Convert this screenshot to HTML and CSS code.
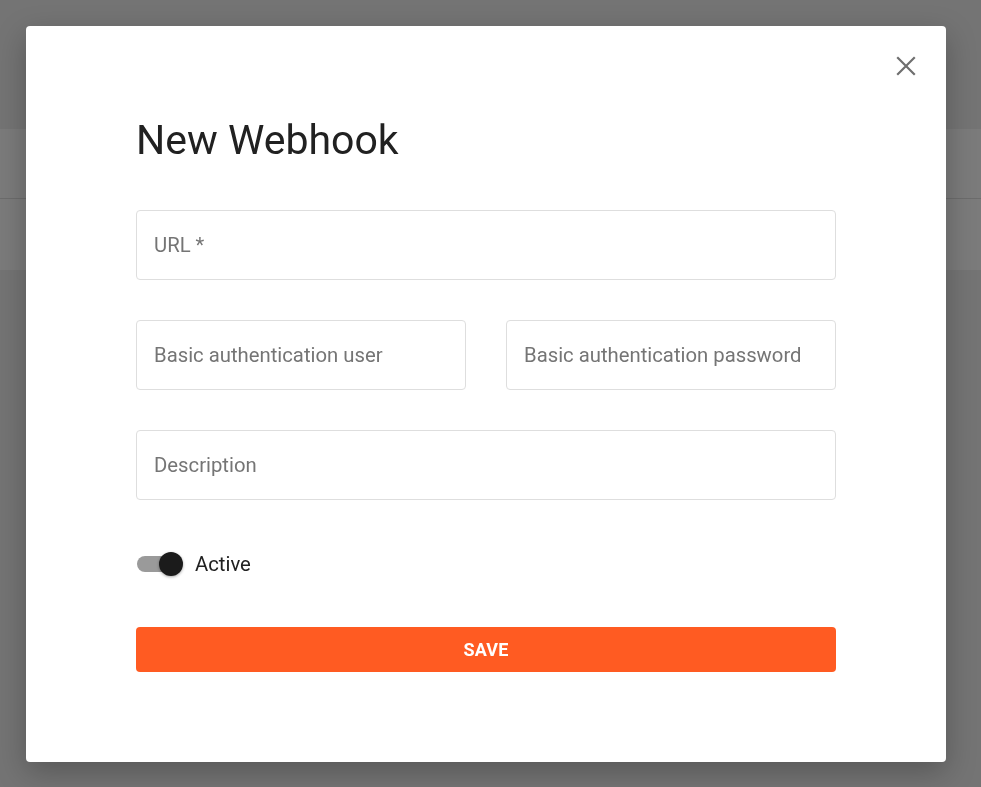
FILE: index.html
```html
<!DOCTYPE html>
<html lang="en">
<head>
<meta charset="utf-8">
<title>New Webhook</title>
<link rel="stylesheet" href="styles.css">
</head>
<body>
<div class="page">
  <div class="page-card">
    <div class="page-row"></div>
    <div class="page-row"></div>
  </div>
</div>
<div class="overlay">
  <div class="modal">
    <button class="close" aria-label="Close">
      <svg width="20" height="20" viewBox="0 0 20 20"><path d="M2 2 L18 18 M18 2 L2 18" stroke="#6f6f6f" stroke-width="2.2" stroke-linecap="square"/></svg>
    </button>
    <h1 class="title">New Webhook</h1>
    <form class="form">
      <div class="field"><span class="placeholder">URL *</span></div>
      <div class="row">
        <div class="field"><span class="placeholder">Basic authentication user</span></div>
        <div class="field"><span class="placeholder">Basic authentication password</span></div>
      </div>
      <div class="field"><span class="placeholder">Description</span></div>
      <label class="toggle">
        <span class="switch"><span class="track"></span><span class="thumb"></span></span>
        <span class="toggle-label">Active</span>
      </label>
      <button type="button" class="save">SAVE</button>
    </form>
  </div>
</div>
</body>
</html>
```
FILE: styles.css
```css
* { box-sizing: border-box; }
html, body { margin: 0; padding: 0; }
body {
  width: 981px;
  height: 787px;
  overflow: hidden;
  background: #747474;
  font-family: Roboto, "Liberation Sans", sans-serif;
}
.page { padding-top: 129px; }
.page-card { background: #7b7b7b; }
.page-row { height: 70px; border-bottom: 1px solid #6c6c6c; }
.page-row:last-child { border-bottom: none; height: 71px; }

.overlay {
  position: fixed;
  inset: 0;
  padding: 26px 35px 25px 26px;
}
.modal {
  position: relative;
  width: 920px;
  height: 736px;
  background: #fff;
  border-radius: 4px;
  box-shadow: 0 10px 30px rgba(0,0,0,0.25);
  padding: 0 110px;
}
.close {
  position: absolute;
  top: 30px;
  right: 30px;
  width: 20px;
  height: 20px;
  padding: 0;
  border: none;
  background: none;
  cursor: pointer;
}
.close svg { display: block; width: 20px; height: 20px; }
.title {
  margin: 0;
  padding-top: 88px;
  font-size: 41px;
  font-weight: 400;
  line-height: 52px;
  color: #212121;
}
.form {
  margin-top: 44px;
  display: flex;
  flex-direction: column;
  gap: 40px;
}
.row {
  display: grid;
  grid-template-columns: 1fr 1fr;
  gap: 40px;
}
.field {
  height: 70px;
  border: 1px solid #dedede;
  border-radius: 4px;
  display: flex;
  align-items: center;
  padding: 0 17px;
}
.placeholder {
  font-size: 20.3px;
  color: #757575;
}
.toggle {
  display: flex;
  align-items: center;
  gap: 11px;
  height: 48px;
  margin-top: 0;
}
.switch {
  position: relative;
  width: 48px;
  height: 24px;
  display: block;
}
.track {
  position: absolute;
  left: 1px;
  top: 4px;
  width: 34px;
  height: 16px;
  border-radius: 8px;
  background: #9a9a9a;
}
.thumb {
  position: absolute;
  left: 23px;
  top: 0;
  width: 24px;
  height: 24px;
  border-radius: 50%;
  background: #1b1b1b;
  box-shadow: 0 1px 3px rgba(0,0,0,0.35);
}
.toggle-label {
  font-size: 20.3px;
  color: #212121;
}
.save {
  height: 45px;
  margin-top: -1px;
  border: none;
  border-radius: 4px;
  background: #ff5b22;
  color: #fff;
  font-family: Roboto, "Liberation Sans", sans-serif;
  font-weight: 700;
  font-size: 18px;
  letter-spacing: 0.2px;
}
```
